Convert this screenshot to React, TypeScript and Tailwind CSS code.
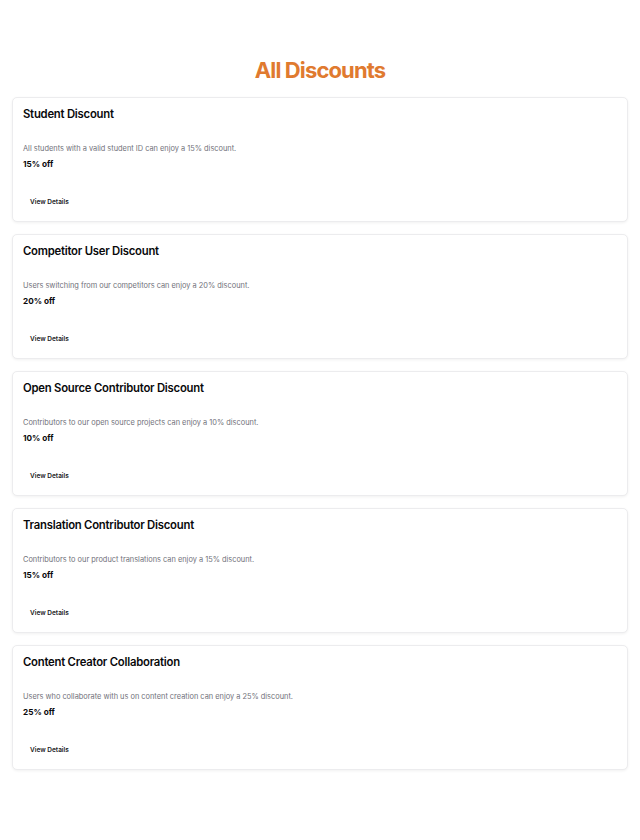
const discounts = [
    {
        name: 'Student Discount',
        description: 'All students with a valid student ID can enjoy a 15% discount.',
        amount: '15% off',
    },
    {
        name: 'Competitor User Discount',
        description: 'Users switching from our competitors can enjoy a 20% discount.',
        amount: '20% off',
    },
    {
        name: 'Open Source Contributor Discount',
        description: 'Contributors to our open source projects can enjoy a 10% discount.',
        amount: '10% off',
    },
    {
        name: 'Translation Contributor Discount',
        description: 'Contributors to our product translations can enjoy a 15% discount.',
        amount: '15% off',
    },
    {
        name: 'Content Creator Collaboration',
        description: 'Users who collaborate with us on content creation can enjoy a 25% discount.',
        amount: '25% off',
    },
];

function DiscountCard({ name, description, amount }: (typeof discounts)[number]) {
    return (
        <div className="flex flex-col rounded-[5px] border border-[#ececee] bg-white px-[10px] pt-[8px] pb-[8px] shadow-[0_1px_3px_rgba(0,0,0,0.06)]">
            <h2 className="text-[11.3px] leading-[16px] font-semibold tracking-[-0.02em] text-[#09090b]">{name}</h2>
            <p className="mt-[21px] text-[7.4px] leading-[12px] text-[#71717a]">{description}</p>
            <p className="mt-[3px] text-[8.2px] leading-[12px] font-bold text-[#09090b]">{amount}</p>
            <div className="mt-[23px] flex">
                <button className="h-5 rounded-[4px] px-[7px] text-[6.5px] font-semibold text-[#18181b]">View Details</button>
            </div>
        </div>
    );
}

export default function App() {
    return (
        <div className="min-h-[840px] bg-white px-3 pt-[56px] font-['Inter',sans-serif]">
            <h1 className="text-center text-[22px] leading-[28px] font-bold tracking-[-0.04em] text-[#e07a2f]">
                All Discounts
            </h1>
            <div className="mt-[13px] flex flex-col gap-[12px]">
                {discounts.map((d) => (
                    <DiscountCard key={d.name} {...d} />
                ))}
            </div>
        </div>
    );
}
